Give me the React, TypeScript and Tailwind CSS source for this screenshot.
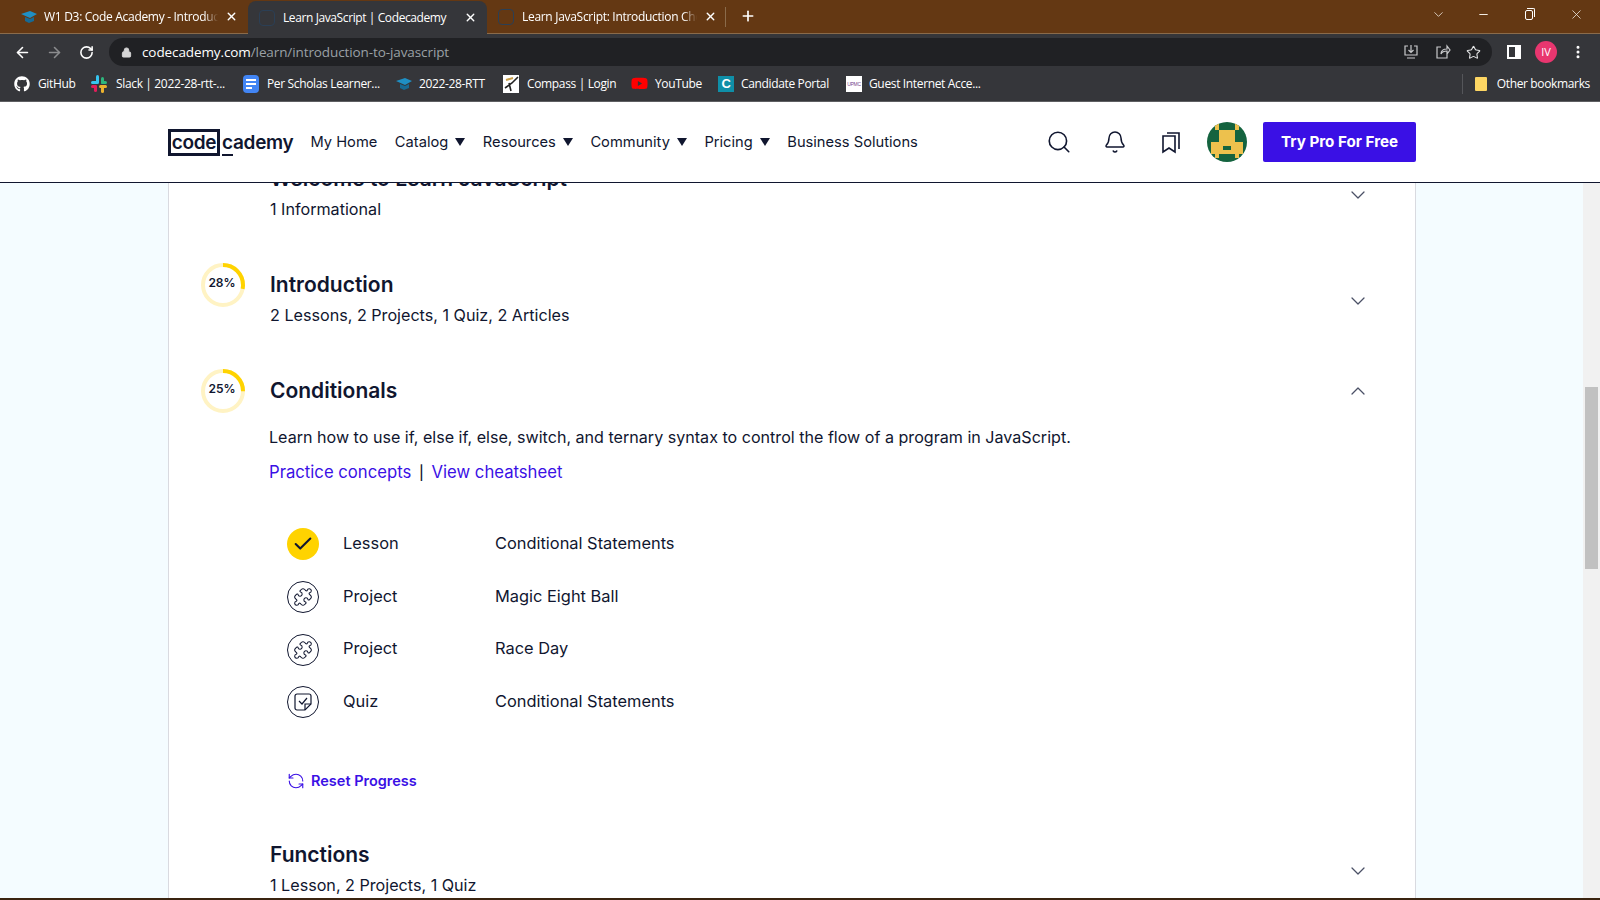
import { ArrowLeft, ArrowRight, RotateCw, Lock, Star, Plus, X, Minus, ChevronDown, ChevronUp, Puzzle, Check, RefreshCcw, Search, Bell, MoreVertical } from "lucide-react";
import { FaGithub, FaYoutube } from "react-icons/fa";

const uiFont = "font-['Open_Sans',sans-serif]";
const siteFont = "font-['Inter',sans-serif]";

function CapIcon() {
  return (
    <svg width="16" height="16" viewBox="0 0 16 16" className="shrink-0">
      <path d="M0 5 L9 2 L16 5 L9 9 Z" fill="#1f8fc4" />
      <path d="M4 8 L9 10 L13 8 L13 12 L8 14 L4 12 Z" fill="#176a94" />
    </svg>
  );
}

function TabFavicon() {
  return <div className="w-4 h-4 shrink-0 rounded-sm border border-[#2b3f55]" />;
}

function SlackIcon() {
  return (
    <svg width="16" height="18" viewBox="0 0 16 18" className="shrink-0">
      <rect x="5" y="0" width="3" height="8" rx="1.5" fill="#36c5f0" />
      <rect x="0" y="6" width="8" height="3" rx="1.5" fill="#36c5f0" />
      <rect x="10" y="2" width="3" height="7" rx="1.5" fill="#2eb67d" />
      <rect x="10" y="6" width="6" height="3" rx="1.5" fill="#2eb67d" />
      <rect x="8" y="10" width="8" height="3" rx="1.5" fill="#ecb22e" />
      <rect x="10" y="10" width="3" height="8" rx="1.5" fill="#ecb22e" />
      <rect x="3" y="10" width="3" height="7" rx="1.5" fill="#e01e5a" />
      <rect x="0" y="10" width="6" height="3" rx="1.5" fill="#e01e5a" />
    </svg>
  );
}

function DocsIcon() {
  return (
    <div className="w-4 h-[18px] shrink-0 rounded-sm bg-[#4285f4] flex flex-col justify-center gap-[2px] px-[3px]">
      <div className="h-[2px] bg-white" />
      <div className="h-[2px] bg-white" />
      <div className="h-[2px] w-[6px] bg-white" />
    </div>
  );
}

function CompassIcon() {
  return (
    <svg width="16" height="18" viewBox="0 0 16 18" className="shrink-0">
      <rect width="16" height="18" fill="#fff" />
      <path d="M2 13 L9 8 L15 2 M6 8 L8 16" stroke="#222" strokeWidth="1.6" fill="none" />
      <path d="M3 5 L10 3" stroke="#c9a04a" strokeWidth="2" />
    </svg>
  );
}

function CandidateIcon() {
  return (
    <div className="w-4 h-4 shrink-0 bg-[#0f8fa8] text-white text-[13px] leading-4 font-bold text-center font-['Liberation_Sans',sans-serif]">
      C
    </div>
  );
}

function GuestIcon() {
  return (
    <div className="w-4 h-4 shrink-0 bg-white text-[#7b3f8c] text-[5px] leading-4 text-center font-['Liberation_Sans',sans-serif]">
      UPMC
    </div>
  );
}

const bookmarks = [
  { label: "GitHub", icon: <FaGithub size={16} className="text-white shrink-0" />, w: "w-[77px]", gap: "gap-[8px]" },
  { label: "Slack | 2022-28-rtt-...", icon: <SlackIcon />, w: "w-[152px]", gap: "gap-[9px]" },
  { label: "Per Scholas Learner...", icon: <DocsIcon />, w: "w-[153px]", gap: "gap-[8px]" },
  { label: "2022-28-RTT", icon: <CapIcon />, w: "w-[107px]", gap: "gap-[7px]" },
  { label: "Compass | Login", icon: <CompassIcon />, w: "w-[128px]", gap: "gap-[8px]" },
  { label: "YouTube", icon: <FaYoutube size={17} className="text-[#ff0000] shrink-0" />, w: "w-[87px]", gap: "gap-[7px]" },
  { label: "Candidate Portal", icon: <CandidateIcon />, w: "w-[128px]", gap: "gap-[7px]" },
  { label: "Guest Internet Acce...", icon: <GuestIcon />, w: "w-[150px]", gap: "gap-[7px]" },
];

function BrowserChrome() {
  return (
    <div className={`${uiFont} shrink-0 text-white`}>
      {/* Tab strip */}
      <div className="h-[34px] bg-[#643813] border-b border-[#8a6b4b] flex items-end">
        <div className="w-[248px] h-[33px] flex items-center pl-[21px] pr-[10px] gap-[7px]">
          <CapIcon />
          <span className="flex-1 text-[12px] tracking-[-0.3px] whitespace-nowrap overflow-hidden [mask-image:linear-gradient(to_left,transparent,black_14px)]">W1 D3: Code Academy - Introduction</span>
          <X size={13} strokeWidth={2.5} className="shrink-0" />
        </div>
        <div className="w-[239px] h-[33px] bg-[#35363a] rounded-t-lg flex items-center pl-[11px] pr-[10px] gap-[7px] mb-[-1px]">
          <TabFavicon />
          <span className="flex-1 text-[12px] tracking-[-0.4px] whitespace-nowrap overflow-hidden pl-[1px]">Learn JavaScript | Codecademy</span>
          <X size={13} strokeWidth={2.5} className="shrink-0" />
        </div>
        <div className="w-[238px] h-[33px] flex items-center pl-[11px] pr-[8px] gap-[7px]">
          <TabFavicon />
          <span className="flex-1 text-[12px] tracking-[-0.3px] whitespace-nowrap overflow-hidden pl-[1px] [mask-image:linear-gradient(to_left,transparent,black_14px)]">Learn JavaScript: Introduction Cheatsheet</span>
          <X size={13} strokeWidth={2.5} className="shrink-0" />
        </div>
        <div className="h-[20px] w-px bg-[#8a6b4b] mb-[6px]" />
        <Plus size={16} strokeWidth={2.5} className="ml-[14px] mb-[9px]" />
        <div className="flex-1" />
        <div className="self-start flex items-center h-[28px] text-[#f2ebe3]">
          <ChevronDown size={15} strokeWidth={1.25} className="mr-[31px]" />
          <Minus size={13} className="mr-[35px]" />
          <div className="relative w-[8px] h-[10px] border border-white rounded-[2px] mr-[36px] mt-[1px]">
            <div className="absolute -top-[3px] left-[1px] w-[8px] h-[9px] border-t border-r border-white rounded-tr-[2px]" />
          </div>
          <X size={15} strokeWidth={1.25} className="mr-[16px]" />
        </div>
      </div>
      {/* Toolbar */}
      <div className="h-[34px] pt-[2px] bg-[#35363a] flex items-center">
        <ArrowLeft size={17} strokeWidth={2.25} className="ml-[14px]" />
        <ArrowRight size={17} strokeWidth={2.25} className="ml-[15px] text-[#8b8c8e]" />
        <RotateCw size={15} strokeWidth={2.5} className="ml-[16px]" />
        <div className="ml-[15px] w-[1383px] h-[28px] rounded-full bg-[#202124] flex items-center pl-[12px] pr-[11px]">
          <Lock size={11} className="text-[#d6d6d6] fill-[#d6d6d6]" />
          <span className="ml-[10px] text-[13.5px] tracking-[-0.1px]">
            codecademy.com<span className="text-[#9aa0a6]">/learn/introduction-to-javascript</span>
          </span>
          <div className="flex-1" />
          <svg width="16" height="16" viewBox="0 0 16 16" fill="none" stroke="#c9cacc" strokeWidth="1.2" className="mr-[16px]">
            <path d="M5 2 H2 V11 H14 V2 H11 M8 1 V8 M5.5 6 L8 8.5 L10.5 6 M4 14 H12" />
          </svg>
          <svg width="16" height="16" viewBox="0 0 16 16" fill="none" stroke="#c9cacc" strokeWidth="1.2" className="mr-[15px]">
            <path d="M6 3 H2 V14 H12 V10 M6 10 C6 6 9 5 12 5 V2 L15 6 L12 10 V7 C9 7 7 8 6 10 Z" />
          </svg>
          <Star size={15} strokeWidth={1.75} className="text-[#e4e5e6]" />
        </div>
        <div className="ml-[15px] w-[14px] h-[14px] border-2 border-white border-r-[6px]" />
        <div className="ml-[14px] w-[22px] h-[22px] rounded-full bg-[#e8366f] text-[11px] leading-[22px] text-center">IV</div>
        <MoreVertical size={16} strokeWidth={2.5} className="ml-[13px]" />
      </div>
      {/* Bookmarks */}
      <div className="h-[34px] pb-[2px] bg-[#35363a] border-b border-[#5e5f62] flex items-center pl-[14px] text-[12px] tracking-[-0.35px]">
        {bookmarks.map((b) => (
          <div key={b.label} className={`${b.w} ${b.gap} flex items-center shrink-0 whitespace-nowrap`}>
            {b.icon}
            <span>{b.label}</span>
          </div>
        ))}
        <div className="flex-1" />
        <div className="h-[20px] w-px bg-[#55565a] mr-[12px]" />
        <div className="w-[12px] h-[14px] bg-[#fdd663] rounded-[1px] mr-[10px]" />
        <span className="mr-[10px]">Other bookmarks</span>
      </div>
    </div>
  );
}

function NavItem({ label, caret }: { label: string; caret?: boolean }) {
  return (
    <div className="flex items-center gap-[6px] whitespace-nowrap">
      <span>{label}</span>
      {caret && <span className="w-0 h-0 border-x-[5px] border-x-transparent border-t-[8px] border-t-[#10162f] mt-[1px] ml-[1px]" />}
    </div>
  );
}

function Avatar() {
  return (
    <svg width="40" height="40" viewBox="0 0 10 10" shapeRendering="crispEdges" className="rounded-full shrink-0">
      <rect width="10" height="10" fill="#14633f" />
      <path d="M2 0 H3 V2 H2 Z M7 0 H8 V2 H7 Z" fill="#edc14d" />
      <path d="M3 2 H7 V5 H3 Z M1 5 H9 V8 H1 Z M2 8 H3 V9 H2 Z M7 8 H8 V9 H7 Z" fill="#edc14d" />
      <path d="M4 6 H6 V7 H4 Z" fill="#14633f" />
    </svg>
  );
}

function SiteHeader() {
  return (
    <header className={`${siteFont} shrink-0 h-[81px] bg-white border-b border-[#10162f] flex items-center pl-[168px] pr-[184px] text-[#10162f]`}>
      <div className="flex items-center mr-[17px] text-[19px] font-semibold leading-none tracking-[-0.3px]">
        <span className="w-[52px] h-[27px] border-[3px] border-[#10162f] flex items-center justify-center">code</span>
        <span className="ml-[2px]">
          <span className="border-b-2 border-[#10162f]">c</span>ademy
        </span>
      </div>
      <nav className="flex items-center gap-[17.5px] text-[14.7px] text-[#10162f]">
        <NavItem label="My Home" />
        <NavItem label="Catalog" caret />
        <NavItem label="Resources" caret />
        <NavItem label="Community" caret />
        <NavItem label="Pricing" caret />
        <NavItem label="Business Solutions" />
      </nav>
      <div className="flex-1" />
      <Search size={26} strokeWidth={1.5} className="mr-[31px]" />
      <Bell size={24} strokeWidth={1.5} className="mr-[34px]" />
      <svg width="22" height="24" viewBox="0 0 22 24" fill="none" stroke="#10162f" strokeWidth="1.6" className="mr-[24px]">
        <path d="M2 6 H14 V22 L8 18 L2 22 Z" />
        <path d="M6 3 H18 V19" />
      </svg>
      <Avatar />
      <button className="ml-[16px] w-[153px] h-[40px] bg-[#3a10e5] rounded-[2px] text-white font-bold text-[15.2px]">Try Pro For Free</button>
    </header>
  );
}

function Ring({ pct, label }: { pct: number; label: string }) {
  const c = 2 * Math.PI * 20;
  return (
    <div className="relative w-[44px] h-[44px] shrink-0">
      <svg width="44" height="44" viewBox="0 0 44 44" className="-rotate-90">
        <circle cx="22" cy="22" r="20" fill="none" stroke="#fff3c4" strokeWidth="4" />
        <circle cx="22" cy="22" r="20" fill="none" stroke="#ffd300" strokeWidth="4" strokeDasharray={`${(c * pct) / 100} ${c}`} />
      </svg>
      <span className="absolute inset-0 flex items-center justify-center text-[12px] font-semibold text-[#10162f] -mt-[4px] -ml-[2px]">{label}</span>
    </div>
  );
}

function Section({ ring, title, sub }: { ring?: { pct: number; label: string }; title: string; sub: string }) {
  return (
    <section className="flex h-[106px]">
      <div className="w-[44px] shrink-0 mr-[25px]">{ring && <Ring {...ring} />}</div>
      <div className="flex-1 pt-[6px]">
        <h3 className="text-[21px] leading-[32px] font-semibold text-[#10162f]">{title}</h3>
        <p className="text-[16.15px] leading-[28px] text-[#10162f]">{sub}</p>
      </div>
      <ChevronDown size={24} strokeWidth={1.25} className="mt-[26px] text-[#4b5066]" />
    </section>
  );
}

const content = [
  { kind: "Lesson", name: "Conditional Statements", icon: "done" },
  { kind: "Project", name: "Magic Eight Ball", icon: "project" },
  { kind: "Project", name: "Race Day", icon: "project" },
  { kind: "Quiz", name: "Conditional Statements", icon: "quiz" },
];

function ItemIcon({ icon }: { icon: string }) {
  if (icon === "done") {
    return (
      <div className="w-8 h-8 rounded-full bg-[#ffd300] flex items-center justify-center shrink-0">
        <Check size={22} strokeWidth={2.25} className="text-[#10162f]" />
      </div>
    );
  }
  return (
    <div className="w-8 h-8 rounded-full border border-[#10162f] flex items-center justify-center shrink-0">
      {icon === "project" ? (
        <Puzzle size={20} strokeWidth={1.25} className="text-[#10162f]" />
      ) : (
        <svg width="18" height="18" viewBox="0 0 18 18" fill="none" stroke="#10162f" strokeWidth="1.2">
          <path d="M3 1 H15 A2 2 0 0 1 17 3 V11 L11 17 H3 A2 2 0 0 1 1 15 V3 A2 2 0 0 1 3 1 Z" />
          <path d="M17 11 H11 V17 M5 8 L8 11 L13 5" />
        </svg>
      )}
    </div>
  );
}

function CourseCard() {
  return (
    <main className="w-[1248px] ml-[168px] -mt-[26px] bg-white border-x border-[#d9dae0] pl-[32px] pr-[45px] shrink-0">
      <Section title="Welcome to Learn JavaScript" sub="1 Informational" />
      <Section ring={{ pct: 28, label: "28%" }} title="Introduction" sub="2 Lessons, 2 Projects, 1 Quiz, 2 Articles" />

      {/* Expanded module */}
      <section className="flex">
        <Ring pct={25} label="25%" />
        <div className="flex-1 ml-[25px] pt-[6px]">
          <h3 className="text-[21px] leading-[32px] font-semibold text-[#10162f]">Conditionals</h3>
          <p className="mt-[16px] -ml-px text-[16.1px] leading-[28px] text-[#10162f]">
            Learn how to use if, else if, else, switch, and ternary syntax to control the flow of a program in JavaScript.
          </p>
          <p className="mt-[7px] -ml-px text-[16.7px] leading-[28px] text-[#3a10e5]">
            Practice concepts <span className="text-[#10162f] text-[14px] font-medium mx-[3px]">|</span> View cheatsheet
          </p>
          <ul className="mt-[31px] ml-[17px] text-[16.4px] text-[#10162f]">
            {content.map((c, i) => (
              <li key={i} className="h-[52.67px] flex items-center">
                <ItemIcon icon={c.icon} />
                <span className="ml-[24px] w-[152px] -mt-[2px]">{c.kind}</span>
                <span className="-mt-[2px]">{c.name}</span>
              </li>
            ))}
          </ul>
          <div className="mt-[40px] ml-[17px] h-[24px] flex items-center gap-[6px] text-[#3a10e5] text-[14.5px] font-semibold">
            <RefreshCcw size={18} strokeWidth={1.5} />
            Reset Progress
          </div>
        </div>
        <ChevronUp size={24} strokeWidth={1.25} className="mt-[10px] text-[#4b5066]" />
      </section>

      <div className="h-[40px]" />
      <Section title="Functions" sub="1 Lesson, 2 Projects, 1 Quiz" />
    </main>
  );
}

export default function App() {
  return (
    <div className="h-[900px] w-[1600px] overflow-hidden flex flex-col bg-[#f4fcff]">
      <BrowserChrome />
      <SiteHeader />
      <div className={`${siteFont} flex-1 min-h-0 flex overflow-hidden`}>
        <div className="flex-1 overflow-hidden">
          <CourseCard />
        </div>
        <div className="w-[17px] shrink-0 bg-[#f1f1f1] flex flex-col items-center pt-[204px]">
          <div className="w-[13px] h-[182px] bg-[#c1c1c1]" />
        </div>
      </div>
      <div className="h-[2px] shrink-0 bg-[#3a2410]" />
    </div>
  );
}
